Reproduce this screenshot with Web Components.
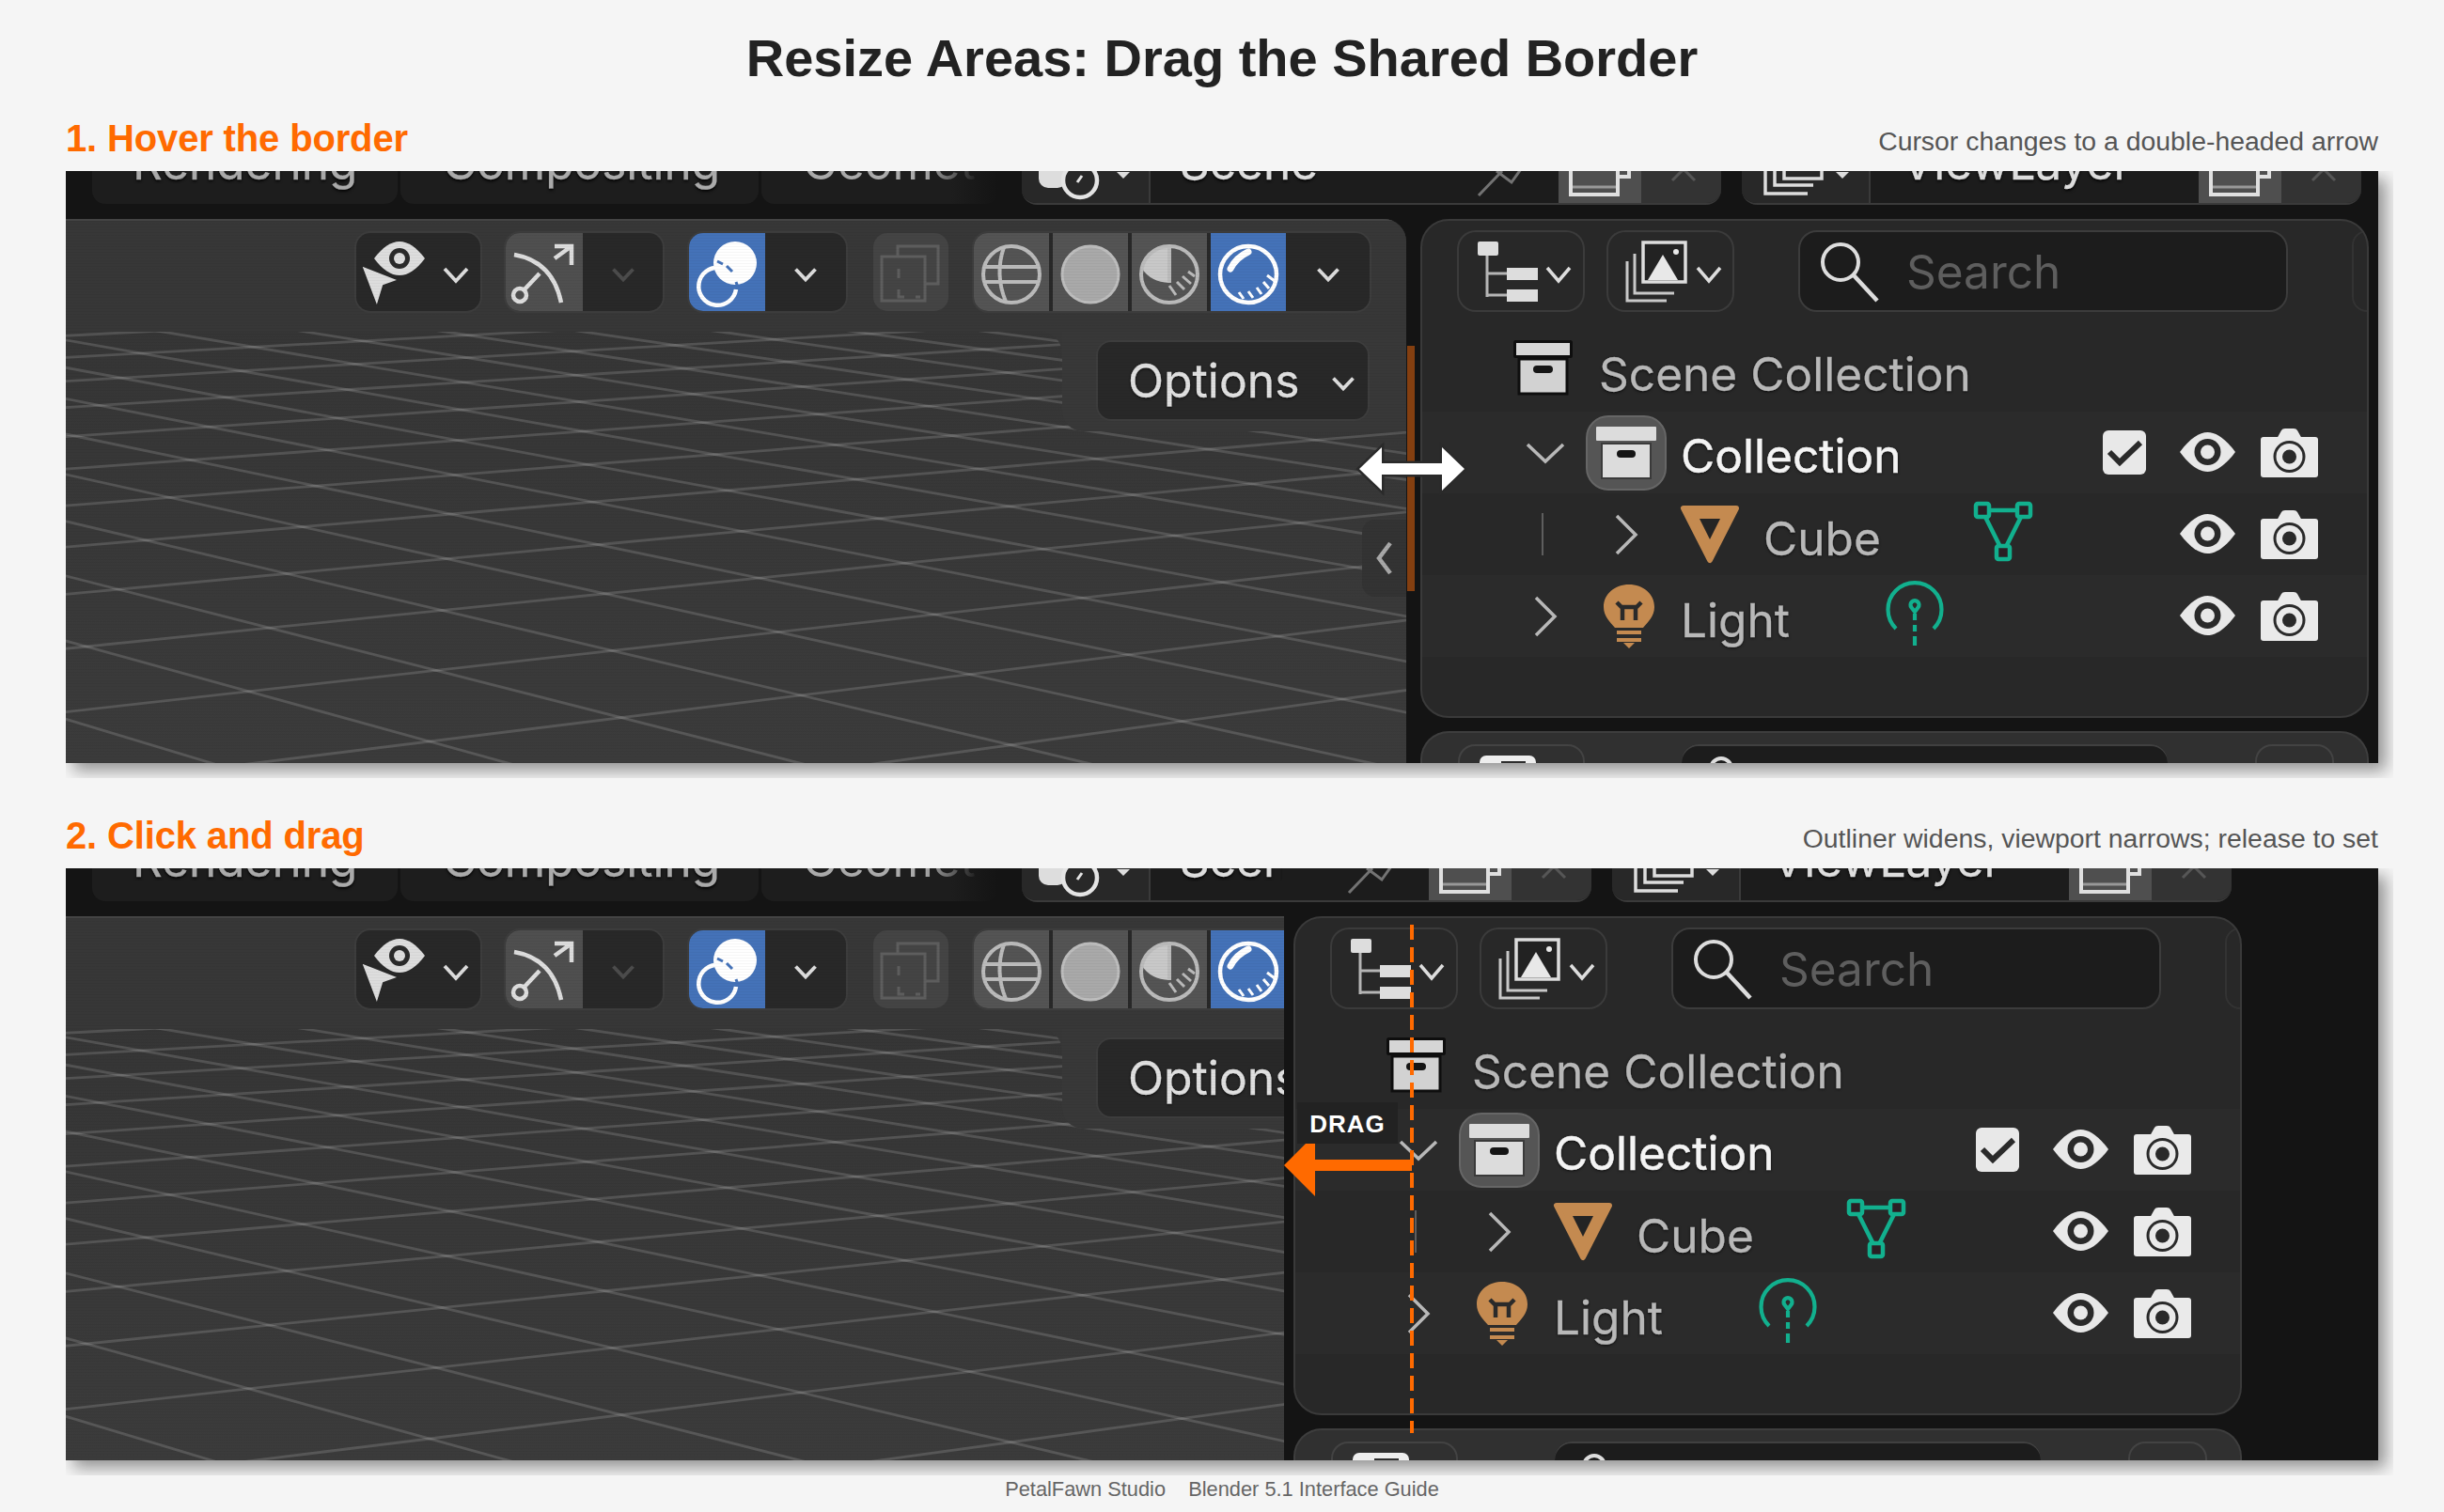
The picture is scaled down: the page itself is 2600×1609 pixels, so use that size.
<!DOCTYPE html>
<html lang="en"><head><meta charset="utf-8"><title>Resize Areas</title>
<style>html,body{margin:0;background:#f5f5f5}</style></head>
<body>
<guide-page>
  <span slot="title">Resize Areas: Drag the Shared Border</span>
  <guide-section>
    <span slot="heading">1. Hover the border</span>
    <span slot="note">Cursor changes to a double-headed arrow</span>
    <bl-view mode="hover"><hover-overlay slot="over"></hover-overlay></bl-view>
  </guide-section>
  <guide-section class="second">
    <span slot="heading">2. Click and drag</span>
    <span slot="note">Outliner widens, viewport narrows; release to set</span>
    <bl-view mode="drag"><drag-overlay slot="over"></drag-overlay></bl-view>
  </guide-section>
  <span slot="footer">PetalFawn Studio    Blender 5.1 Interface Guide</span>
</guide-page>
<script>
const SANS='"Liberation Sans",Arial,sans-serif', UI='Inter,"Liberation Sans",sans-serif';
function def(name,html,after){
  customElements.define(name,class extends HTMLElement{
    connectedCallback(){ if(this.shadowRoot) return; const s=this.attachShadow({mode:'open'}); s.innerHTML=typeof html==='function'?html(this):html; if(after) after(s,this); }
  });
}
const I={
 'chev':[24,14,'<path d="M1.5 1.5 12 12.5 22.5 1.5" fill="none" stroke="#ddd" stroke-width="3.8"/>'],
 'chev-dim':[24,14,'<path d="M1.5 1.5 12 12.5 22.5 1.5" fill="none" stroke="#4c4c4c" stroke-width="3.8"/>'],
 'tree-d':[42,22,'<path d="M2 2 21 20 40 2" fill="none" stroke="#b8b8b8" stroke-width="3.5"/>'],
 'tree-r':[24,44,'<path d="M2 2 22 22 2 42" fill="none" stroke="#b8b8b8" stroke-width="3.5"/>'],
 'tree-l':[16,36,'<path d="M14 2 2 18 14 34" fill="none" stroke="#a8a8a8" stroke-width="4.5"/>'],
 'archive':[63,60,'<rect x="1.5" y="1.5" width="60" height="16" rx="1" fill="#d6d6d6" stroke="#0e0e0e" stroke-width="3"/><rect x="6" y="20" width="51" height="37" fill="#d2d2d2" stroke="#0e0e0e" stroke-width="3"/><rect x="21" y="27" width="21" height="8" rx="4" fill="#151515"/>'],
 'archive-a':[64,56,'<rect x="0" y="0" width="64" height="15" rx="1" fill="#dcdcdc"/><rect x="6" y="18" width="52" height="37" fill="#dcdcdc" stroke="#3a3a3a" stroke-width="2"/><rect x="22" y="25" width="20" height="8" rx="4" fill="#151515"/>'],
 'eye':[61,42,'<path d="M1 21C12 6 22 0 30.500 0S49 6 60 21C49 36 39 42 30.500 42S12 36 1 21Z" fill="#e8e8e8"/><circle cx="30.500" cy="21" r="14" fill="#2a2a2a"/><circle cx="30.500" cy="21" r="7.500" fill="#e8e8e8"/>'],
 'camera':[61,52,'<path d="M17 11 22 2Q23 0 26 0H35Q38 0 39 2L44 11Z" fill="#eaeaea"/><rect y="9" width="61" height="43" rx="3" fill="#eaeaea"/><circle cx="30.500" cy="30" r="17" fill="#2a2a2a"/><circle cx="30.500" cy="30" r="14" fill="#eaeaea"/><circle cx="30.500" cy="30" r="7.500" fill="#2a2a2a"/>'],
 'check':[46,47,'<rect width="46" height="47" rx="6" fill="#e8e8e8"/><path d="M7 23 18 34 40 13" fill="none" stroke="#2a2a2a" stroke-width="6"/>'],
 'mesh':[62,62,'<path d="M16 8H46M12 15 27 45M50 15 35 45" stroke="#12b08e" stroke-width="4.500" fill="none"/><g fill="#2a1f24" stroke="#12b08e" stroke-width="4.500"><rect x="2" y="1" width="14" height="14" rx="2"/><rect x="46" y="1" width="14" height="14" rx="2"/><rect x="24" y="46" width="14" height="14" rx="2"/></g>'],
 'lightd':[62,72,'<g fill="none" stroke="#12b08e" stroke-width="4.200"><path d="M11 52A28.500 28.500 0 1 1 51 52"/><path d="M31 34 27.500 29.500A4.500 4.500 0 1 1 34.500 29.500Z"/><path d="M31 36V43M31 48V55M31 60V70"/></g>'],
 'tri':[64,63,'<path d="M4 4H60L32 59Z" fill="#c48a50" stroke="#c48a50" stroke-width="6" stroke-linejoin="round"/><path d="M21 15H43L32 37Z" fill="#242424"/>'],
 'bulb':[54,68,'<path d="M27 0C42 0 54 10 54 24C54 34 47 40 42 46H12C7 40 0 34 0 24C0 10 12 0 27 0Z" fill="#c48a50"/><path d="M14 19 19 24H35L40 19M20 24V38M34 24V38" fill="none" stroke="#2a2a2a" stroke-width="4.500"/><path d="M14 51H40M14 59H40" stroke="#c48a50" stroke-width="4"/><path d="M21 62H33L27 68Z" fill="#c48a50"/>'],
 'grp-a':[132,83,'<path d="M19 27C28 15 37 9 46 9S64 15 73 27C64 39 55 45 46 45S28 39 19 27Z" fill="#ddd"/><circle cx="46" cy="27" r="11" fill="#2a2a2a"/><circle cx="46" cy="27" r="6" fill="#ddd"/><path d="M5 34 46 50 29 56 22 79Z" fill="#ddd" stroke="#282828" stroke-width="2"/><path d="M94 38 106 51 118 38" fill="none" stroke="#ddd" stroke-width="3.800"/>'],
 'grp-b':[82,83,'<g fill="none" stroke="#ddd" stroke-width="4.500"><path d="M9 23Q50 30 59 74"/><circle cx="15" cy="66" r="7"/><path d="M20 60 36 43M52 27 70 14M52 14H70V34"/></g>'],
 'grp-c':[81,83,'<circle cx="49" cy="32" r="23" fill="#fff"/><path d="M33 37A20 20 0 1 0 50 60" fill="none" stroke="#fff" stroke-width="4.500"/><path d="M40 35 46 41M50 52 52 58M30 30 36 33" stroke="#4472b8" stroke-width="3"/>'],
 'grp-d':[80,83,'<g fill="none" stroke="#5e5e5e" stroke-width="3"><rect x="9" y="25" width="46" height="47"/><path d="M26 25V14H69V54H55M27 38V48M27 60V68H33M45 68H50"/></g>'],
 'wire':[80,83,'<g fill="none" stroke="#bbb" stroke-width="4"><circle cx="40" cy="44" r="30"/><path d="M12 36H68M12 52H68"/><path d="M32 15Q22 44 34 73"/></g>'],
 'solid':[80,83,'<circle cx="40" cy="44" r="30" fill="#a9a9a9" stroke="#bdbdbd" stroke-width="3"/>'],
 'material':[80,83,'<path d="M40 14A30 30 0 0 0 11 38Q20 52 40 53Z" fill="#c8c8c8"/><g fill="none" stroke="#bbb" stroke-width="4"><circle cx="40" cy="44" r="30"/><path d="M40 14V53"/><path d="M40 56 47 66M48 52 56 60M54 46 63 54M60 41 67 46" stroke-width="3"/></g>'],
 'rendered':[80,83,'<g fill="none" stroke="#fff"><circle cx="40" cy="44" r="30" stroke-width="4.500"/><path d="M21 38Q27 26 40 20" stroke-width="7" stroke-linecap="round"/><path d="M30 63 35 70M40 62 45 69M49 58 54 65M56 52 62 59M60 45 68 51" stroke-width="3"/></g>'],
 'filter1':[135,87,'<rect x="21" y="12" width="22" height="15" rx="2" fill="#ddd"/><path d="M31 27V71M31 46H52M31 69H52" fill="none" stroke="#b5b5b5" stroke-width="3"/><rect x="52" y="40" width="33" height="13" fill="#ddd"/><rect x="52" y="63" width="33" height="13" fill="#ddd"/><path d="M95 40 107 54 119 40" fill="none" stroke="#ddd" stroke-width="3.500"/>'],
 'filter2':[136,87,'<g fill="none" stroke="#c8c8c8" stroke-width="3"><path d="M22 33V75H64M30 25V67H72"/></g><rect x="39" y="13" width="45" height="42" fill="#222" stroke="#ddd" stroke-width="3.500"/><path d="M44 53 60 26 76 53Z" fill="#e8e8e8"/><circle cx="74" cy="23" r="3" fill="#e8e8e8"/><path d="M97 40 109 54 121 40" fill="none" stroke="#ddd" stroke-width="3.500"/>'],
 'mag':[66,70,'<circle cx="24" cy="25" r="19" fill="none" stroke="#ddd" stroke-width="4"/><path d="M38 39 63 66" stroke="#ddd" stroke-width="4.500"/>'],
 'scene-i':[136,34,'<rect x="18" y="-14" width="30" height="32" rx="10" fill="#ddd"/><circle cx="62" cy="10" r="18" fill="#282828" stroke="#e4e4e4" stroke-width="4.500"/><path d="M64 5 59 12" stroke="#e4e4e4" stroke-width="3"/><path d="M101 1 108 8 115 1Z" fill="#ddd"/>'],
 'vl-i':[136,34,'<g fill="none" stroke="#ddd" stroke-width="3.500"><path d="M25 -10V24H70M35 -10V15H76"/><rect x="45" y="-16" width="40" height="24" fill="#282828"/></g><path d="M100 1 107 8 114 1Z" fill="#ddd"/>'],
 'pin':[52,34,'<g fill="none" stroke="#737373" stroke-width="3"><path d="M3 26 28 0M22 0 38 12 48 -2"/></g>'],
 'dup':[88,34,'<g fill="none" stroke="#e0e0e0" stroke-width="4"><path d="M29 6H75V-10"/><rect x="13" y="-10" width="50" height="35" fill="#4f4f4f"/></g><path d="M13 17H63" stroke="#e0e0e0" stroke-width="3" opacity=".5"/>'],
 'x':[85,34,'<path d="M33 10 45 -2 57 10" fill="none" stroke="#565656" stroke-width="3"/>'],
 'prop1':[135,30,'<rect x="23" y="12" width="60" height="30" rx="7" fill="#eee"/><rect x="46" y="18" width="26" height="20" fill="#2d2d2d"/>'],
 'mag2':[50,30,'<circle cx="25" cy="26" r="11" fill="none" stroke="#ddd" stroke-width="4"/>']
};
def('bl-icon',h=>{const [w,ht,m]=I[h.getAttribute('name')];
  return `<style>:host{display:block;flex:none;line-height:0}svg{overflow:visible;display:block}</style><svg xmlns="http://www.w3.org/2000/svg" width="${w}" height="${ht}" viewBox="0 0 ${w} ${ht}">${m}</svg>`;});

def('guide-page',`<style>
:host{display:flex;flex-direction:column;width:2600px;height:1609px;box-sizing:border-box;padding:30px 0 0 70px;font-family:${SANS};overflow:hidden}
.t{width:2460px;text-align:center;font:bold 56px/64px ${SANS};color:#222;margin-bottom:30px}
.f{width:2460px;text-align:center;font:21.8px/26px ${SANS};color:#666;margin-top:2px;white-space:pre}
</style><div class="t"><slot name="title"></slot></div><slot></slot><div class="f"><slot name="footer"></slot></div>`);

def('guide-section',`<style>
:host{display:block;width:2476px}
:host(.second){margin-top:38px}
.h{display:flex;justify-content:space-between;align-items:baseline;width:2460px;height:44px;margin-bottom:14px}
.a{font:bold 40px/44px ${SANS};color:#ff6a00;letter-spacing:-.15px;transform:translateY(1px)}
.b{font:28.4px/34px ${SANS};color:#555}
.s{width:2460px;height:630px;padding:0 16px 16px 0;overflow:hidden}
</style><div class="h"><span class="a"><slot name="heading"></slot></span><span class="b"><slot name="note"></slot></span></div><div class="s"><slot></slot></div>`);

const row=(cls,inner)=>`<div class="row ${cls}">${inner}</div>`;
const ctrl=(c)=>`<div class="ctl">${c?'<bl-icon name="check" class="ck"></bl-icon>':''}<bl-icon name="eye" class="ey"></bl-icon><bl-icon name="camera"></bl-icon></div>`;

def('bl-outliner',`<style>
:host{display:block;height:531px;box-sizing:border-box;background:#282828;border:2px solid #3a3a3a;border-radius:30px;padding-top:10px;overflow:hidden;font-family:${UI}}
.top{display:flex;padding-left:37px;height:87px;margin-bottom:19px}
.top>*{flex:none}
.b{width:136px;height:87px;box-sizing:border-box;box-shadow:inset 0 0 0 2px #3b3b3b;border-radius:20px}
.b+.b{margin-left:23px;width:136px}
.s{margin-left:68px;width:521px;height:87px;box-sizing:border-box;background:#1c1c1c;border:2px solid #3c3c3c;border-radius:20px;display:flex;align-items:center;padding-left:19px;font-size:49.5px;color:#5e5e5e}
.s span{margin-left:28px;line-height:78px}
.sm{margin-left:68px;width:40px;height:87px;box-sizing:border-box;border:2px solid #333;border-radius:16px}
.row{display:flex;align-items:center;height:87px;font-size:49.6px;color:#b8b8b8;text-shadow:0 1px 3px rgba(0,0,0,.8);-webkit-text-stroke:.3px currentColor}
.alt{background:#2b2b2b}
.txt{padding-top:9px;line-height:60px;white-space:nowrap}
.r0 .txt,.txt.on{padding-top:7px}
.on{color:#f4f4f4;-webkit-text-stroke:.5px currentColor}
.ctl{margin-left:auto;padding-right:52px;display:flex;align-items:center;gap:26px;height:52px}
.ey{margin-bottom:2px}
.ck{margin-right:9px}
.hl{width:86px;height:80px;box-sizing:border-box;background:#555;border:2px solid #666;border-radius:24px;margin:0 15px 0 22px;padding:10px 0 0 9px}
.ln{width:2px;height:45px;background:#5e5e5e;margin:0 76px 0 127px}
</style>
<div class="top"><div class="b"><bl-icon name="filter1" style="margin-left:1px"></bl-icon></div><div class="b"><bl-icon name="filter2"></bl-icon></div>
<div class="s"><bl-icon name="mag"></bl-icon><span>Search</span></div><div class="sm"></div></div>
${row('r0','<bl-icon name="archive" style="margin:-5px 28px 0 97px"></bl-icon><span class="txt">Scene Collection</span>')}
${row('alt','<bl-icon name="tree-d" style="margin-left:110px"></bl-icon><div class="hl"><bl-icon name="archive-a"></bl-icon></div><span class="txt on">Collection</span>'+ctrl(1))}
${row('','<div class="ln"></div><bl-icon name="tree-r"></bl-icon><bl-icon name="tri" style="margin:0 25px 0 45px"></bl-icon><span class="txt">Cube</span><bl-icon name="mesh" style="margin:-5px 0 0 99px"></bl-icon>'+ctrl(0))}
${row('alt','<bl-icon name="tree-r" style="margin-left:119px"></bl-icon><bl-icon name="bulb" style="margin:0 28px 0 50px"></bl-icon><span class="txt">Light</span><bl-icon name="lightd" style="margin:-6px 0 0 102px"></bl-icon>'+ctrl(0))}
`);

def('bl-properties',`<style>
:host{display:flex;margin-top:14px;height:60px;box-sizing:border-box;background:#303030;border:2px solid #3e3e3e;border-bottom:0;border-radius:30px 30px 0 0;padding:12px 0 0 38px}
.b{height:60px;width:135px;box-sizing:border-box;box-shadow:inset 0 0 0 2px #434343;border-radius:18px}
.s{margin-left:103px;width:517px;height:60px;background:#1c1c1c;border-radius:18px;box-shadow:inset 0 2px 0 #404040;display:flex;padding-left:0}
.c{margin-left:93px;width:84px}
</style><div class="b"><bl-icon name="prop1"></bl-icon></div><div class="s"><bl-icon name="mag2" style="margin-left:17px"></bl-icon></div><div class="b c"></div>`);

def('bl-topbar',`<style>
:host{display:flex;height:51px;background:#141414;font:49.5px/48px ${UI};color:#aaa;overflow:hidden;padding-left:28px;box-sizing:border-box;text-shadow:0 2px 3px rgba(0,0,0,.9);-webkit-text-stroke:.3px currentColor}
.tab{height:35px;background:#1d1d1d;border-radius:0 0 14px 14px;overflow:hidden;white-space:nowrap;flex:none;margin-right:3px}
.tab span,.tx{display:block;margin-top:-33px}
.t1{width:325px;padding-left:43px;box-sizing:border-box}
.t2{width:381px;padding-left:45px;box-sizing:border-box}
.t3{width:252px;padding-left:44px;box-sizing:border-box;background:linear-gradient(90deg,#1d1d1d 80%,#141414);margin-right:25px}
.t3 span{color:transparent;background:linear-gradient(90deg,#aaa 0,#aaa 62%,transparent 90%);-webkit-background-clip:text;background-clip:text;text-shadow:none;-webkit-text-stroke:0}
.box{display:flex;height:36px;flex:none;border-bottom:2px solid #3a3a3a;border-radius:0 0 16px 16px;overflow:hidden;box-sizing:border-box;background:#1c1c1c;color:#ddd}
.scene{width:var(--scene)}
.vl{width:659px;margin-left:22px}
.ic{width:137px;flex:none;background:#282828;border-right:2px solid #3a3a3a;box-sizing:border-box}
.fd{flex:1;min-width:0;display:flex;padding-left:31px;position:relative;white-space:nowrap}
.vl .fd{padding-left:33px}
.tx{overflow:hidden;flex:none}
.dup{width:88px;flex:none;background:#4f4f4f}
.x{width:85px;flex:none;background:#333}
.sp{flex:1}
.pin{margin-right:36px}
</style>
<div class="tab t1"><span>Rendering</span></div><div class="tab t2"><span>Compositing</span></div><div class="tab t3"><span>Geometry</span></div>
<div class="box scene"><div class="ic"><bl-icon name="scene-i"></bl-icon></div><div class="fd"><span class="tx" style="width:var(--tw)">Scene</span><span class="sp"></span><bl-icon name="pin" class="pin"></bl-icon></div><div class="dup"><bl-icon name="dup"></bl-icon></div><div class="x"><bl-icon name="x"></bl-icon></div></div>
<div class="box vl"><div class="ic"><bl-icon name="vl-i"></bl-icon></div><div class="fd"><span class="tx">ViewLayer</span></div><div class="dup"><bl-icon name="dup"></bl-icon></div><div class="x"><bl-icon name="x"></bl-icon></div></div>
`);

function solve(A,b){const n=8;for(let i=0;i<n;i++){let p=i;for(let r=i+1;r<n;r++)if(Math.abs(A[r][i])>Math.abs(A[p][i]))p=r;[A[i],A[p]]=[A[p],A[i]];[b[i],b[p]]=[b[p],b[i]];for(let r=i+1;r<n;r++){const f=A[r][i]/A[i][i];for(let c=i;c<n;c++)A[r][c]-=f*A[i][c];b[r]-=f*b[i];}}const x=Array(n).fill(0);for(let i=n-1;i>=0;i--){let s=b[i];for(let c=i+1;c<n;c++)s-=A[i][c]*x[c];x[i]=s/A[i][i];}return x;}
function gridLines(){
  /* floor-plane crossings read off the reference: [column, row, x, y] */
  const raw=[[-1,0,260,845],[0,0,435,795],[1,0,612,750],[2,0,790,705],
   [-1,1,440,955],[0,1,625,905],[1,1,800,855],[2,1,975,810],
   [-1,2,630,1085],[0,2,825,1025],[1,2,1010,970],[2,2,1175,920],
   [-1,3,850,1230],[0,3,1045,1160],[1,3,1225,1100],[2,3,1410,1040],
   [-1,4,1095,1390],[0,4,1310,1320],[1,4,1465,1240]];
  const M=Array.from({length:8},()=>Array(8).fill(0)),V=Array(8).fill(0);
  const add=(r,v)=>{for(let i=0;i<8;i++){V[i]+=r[i]*v;for(let j=0;j<8;j++)M[i][j]+=r[i]*r[j];}};
  for(const [u,v,px,py] of raw){const x=px/1.089,y=97+py/3;add([u,v,1,0,0,0,-u*x,-v*x],x);add([0,0,0,u,v,1,-u*y,-v*y],y);}
  const h=solve(M,V);
  const P=(u,v)=>{const w=h[6]*u+h[7]*v+1;return w<=0.02?null:[(h[0]*u+h[1]*v+h[2])/w,(h[3]*u+h[4]*v+h[5])/w];};
  let out='';
  const line=(f)=>{let a=null,z=null;for(let t=-80;t<=80;t+=.25){const p=f(t);if(!p)continue;if(p[1]<115||p[1]>600||p[0]<-1500||p[0]>3000)continue;if(!a)a=p;z=p;}
    if(a&&z&&a!==z)out+=`<line x1="${a[0].toFixed(1)}" y1="${a[1].toFixed(1)}" x2="${z[0].toFixed(1)}" y2="${z[1].toFixed(1)}"/>`;};
  for(let i=-60;i<=60;i++){line(t=>P(i,t));line(t=>P(t,i));}
  return out;
}
def('bl-viewport',()=>`<style>
:host{display:block;flex:none;width:var(--vw);height:579px;overflow:hidden;background:#141414;border-top-right-radius:var(--vr);font-family:${UI}}
.in{position:relative;width:1426px;height:579px;background:linear-gradient(#343434,#3b3b3b)}
.in::after{content:"";position:absolute;inset:0;pointer-events:none;background:repeating-linear-gradient(0deg,rgba(0,0,0,.035) 0 1px,transparent 1px 3px)}
svg.floor{position:absolute;left:0;top:0}
.hd{position:relative;height:120px;box-sizing:border-box;padding:13px 0 0 309px;display:flex;background:#373737;border-top:2px solid #444}
.g{display:flex;height:83px;border-radius:15px;overflow:hidden;box-shadow:0 0 0 2px #3d3d3d;background:#282828;flex:none}
.a{width:132px}.b{width:167px;margin-left:27px}.c{width:167px;margin-left:28px}.d{width:80px;margin-left:29px;background:#444;box-shadow:none}.e{width:421px;margin-left:27px;background:#282828}
.on{background:#4f4f4f}.bl{background:#4472b8}
.cell{width:80px;flex:none}
.gap{margin-right:4px;background:#545454}
.ch{flex:1;display:flex;align-items:center;justify-content:center;padding-top:5px}
.opw{position:relative;margin-left:1060px;width:366px;height:106px;background:#383838;border-bottom-left-radius:22px;box-sizing:border-box;padding:9px 0 0 36px}
.opw::before{content:"";position:absolute;left:-22px;top:0;width:22px;height:22px;background:radial-gradient(circle at 0 100%,transparent 21px,#373737 22px)}
.op{width:291px;height:86px;box-sizing:border-box;background:#282828;border:2px solid #3d3d3d;border-radius:16px;display:flex;align-items:center;padding-left:32px;font-size:49.8px;color:#e0e0e0;text-shadow:0 1px 3px rgba(0,0,0,.8);-webkit-text-stroke:.3px currentColor}
.op bl-icon{margin:6px 0 0 35px}
.tabr{position:absolute;left:1379px;top:320px;width:47px;height:82px;background:#333;border-radius:14px 0 0 14px;display:flex;align-items:center;justify-content:center}
</style><div class="in"><svg class="floor" width="1426" height="579" fill="none" stroke="#fff" stroke-opacity=".15" stroke-width="2.8">${gridLines()}</svg>
<div class="hd">
 <div class="g a"><bl-icon name="grp-a"></bl-icon></div>
 <div class="g b"><div class="on"><bl-icon name="grp-b"></bl-icon></div><div class="ch"><bl-icon name="chev-dim"></bl-icon></div></div>
 <div class="g c"><div class="bl"><bl-icon name="grp-c"></bl-icon></div><div class="ch"><bl-icon name="chev"></bl-icon></div></div>
 <div class="g d"><bl-icon name="grp-d"></bl-icon></div>
 <div class="g e"><div class="cell gap"><bl-icon name="wire"></bl-icon></div><div class="cell gap"><bl-icon name="solid"></bl-icon></div><div class="cell gap"><bl-icon name="material"></bl-icon></div><div class="cell bl"><bl-icon name="rendered"></bl-icon></div><div class="ch"><bl-icon name="chev"></bl-icon></div></div>
</div>
<div class="opw"><div class="op">Options<bl-icon name="chev"></bl-icon></div></div>
<div class="tabr"><bl-icon name="tree-l"></bl-icon></div>
</div>`);

def('bl-view',`<style>
:host{display:block;position:relative;width:2460px;height:630px;background:#141414;box-shadow:8px 8px 16px rgba(0,0,0,.4);--vw:1426px;--gap:15px;--scene:744px;--vr:24px;--tw:auto}
:host([mode=drag]){--vw:1296px;--gap:10px;--scene:606px;--vr:0px;--tw:109px}
.blur{filter:blur(.7px);width:2460px;height:630px;overflow:hidden}
.body{display:flex;height:579px}
.col{flex:none;width:1009px;margin-left:var(--gap);height:579px;overflow:hidden}
</style><div class="blur"><bl-topbar></bl-topbar><div class="body"><bl-viewport></bl-viewport><div class="col"><bl-outliner></bl-outliner><bl-properties></bl-properties></div></div></div><slot name="over"></slot>`);

def('hover-overlay',`<style>
:host{display:block;position:absolute;inset:0;pointer-events:none}
.bar{position:absolute;left:1427px;top:186px;width:8px;height:261px;background:#843f10}
svg{position:absolute;left:1375px;top:293px;overflow:visible}
</style><div class="bar"></div><svg width="114" height="48" viewBox="0 0 114 48"><path d="M1 24 25 1V18H89V1L113 24 89 47V30H25V47Z" fill="#fff" stroke="#2a2a2a" stroke-width="5" stroke-linejoin="miter" paint-order="stroke"/></svg>`);

def('drag-overlay',`<style>
:host{display:block;position:absolute;inset:0;pointer-events:none}
.dash{position:absolute;left:1430px;top:60px;width:4px;height:541px;background:repeating-linear-gradient(180deg,#ff6a00 0 16px,transparent 16px 24px)}
svg{position:absolute;left:1296px;top:283px}
.lab{position:absolute;left:1310px;top:249px;width:107px;height:44px;background:#222;color:#fff;font:bold 26px/46px ${SANS};letter-spacing:1px;text-align:center}
</style><div class="dash"></div><svg width="136" height="66" viewBox="0 0 136 66"><path d="M0 33 33 0V27H136V39H33V66Z" fill="#ff6a00"/></svg><div class="lab">DRAG</div>`);
</script>
</body></html>
